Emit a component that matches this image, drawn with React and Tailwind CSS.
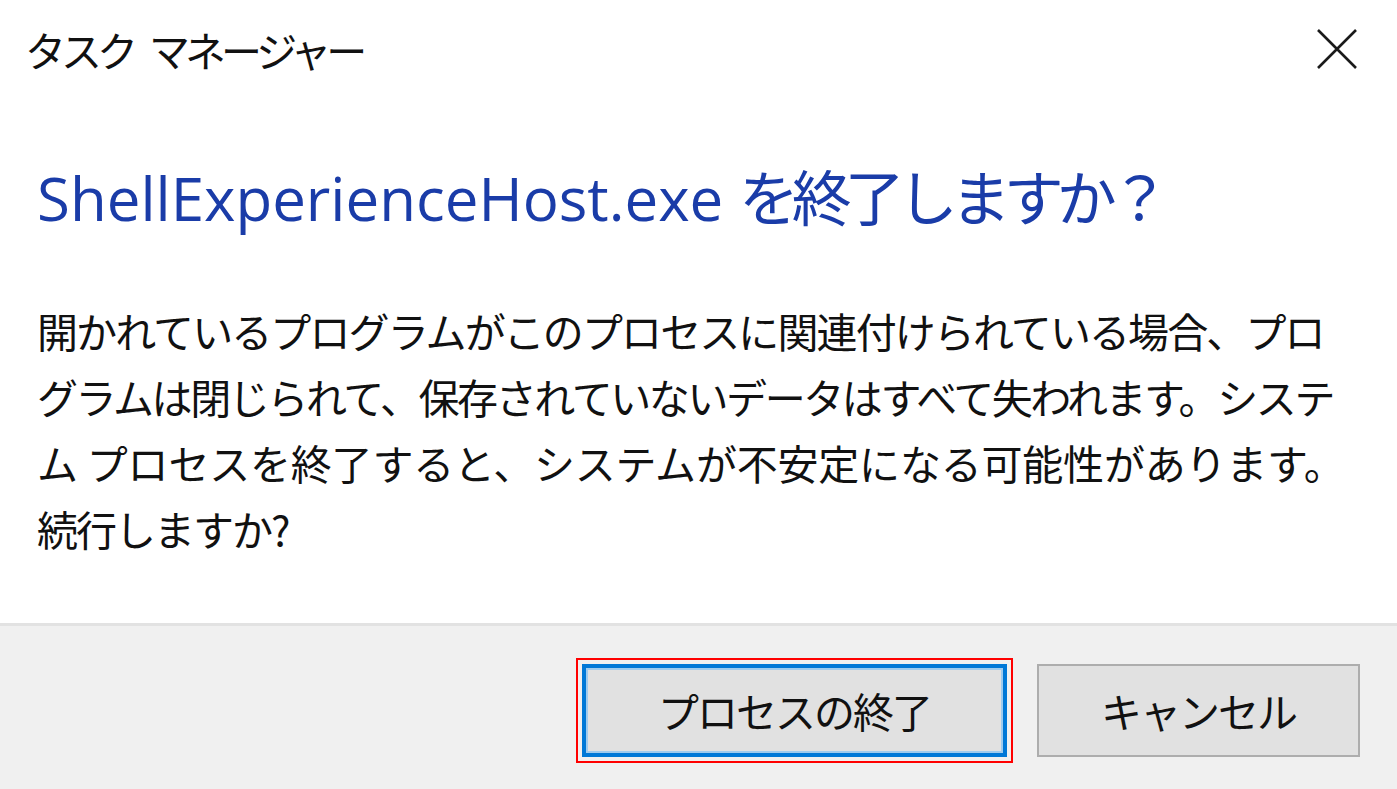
import React from "react";

const jp = { fontFamily: '"Noto Sans CJK JP", "Noto Sans", sans-serif' };
const head = { fontFamily: '"Open Sans", "Noto Sans CJK JP", sans-serif' };

export default function App() {
  return (
    <div className="w-[1397px] h-[789px] bg-white flex flex-col overflow-hidden text-black" style={jp}>
      {/* Title bar */}
      <div className="h-[98px] flex items-center justify-between pl-[25px] pr-[40px] shrink-0">
        <div className="flex text-[41px] leading-[60px] tracking-[-5px] text-[#111]">
          <span>タスク</span>
          <span className="ml-[16px]">マネージャー</span>
        </div>
        <svg width="40" height="40" viewBox="0 0 40 40" className="text-[#1a1a1a]">
          <path d="M1 1 L39 39 M39 1 L1 39" stroke="currentColor" strokeWidth="2.6" fill="none" />
        </svg>
      </div>

      {/* Main instruction */}
      <div className="mt-[57px] pl-[37px] h-[80px] leading-[80px] whitespace-nowrap text-[#1a3ca8]">
        <span className="text-[60px]" style={head}>ShellExperienceHost.exe </span>
        <span className="text-[60px] tracking-[-7px]" style={jp}>を終了しますか？</span>
      </div>

      {/* Body */}
      <div className="mt-[62px] pl-[37px] text-[41px] leading-[66px] text-[#111] whitespace-nowrap">
        <div className="tracking-[-1.9px]">開かれているプログラムがこのプロセスに関連付けられている場合、プロ</div>
        <div className="tracking-[-2.4px]">グラムは閉じられて、保存されていないデータはすべて失われます。システ</div>
        <div className="tracking-[-0.2px]">ム プロセスを終了すると、システムが不安定になる可能性があります。</div>
        <div className="tracking-[-2px]">続行しますか?</div>
      </div>

      {/* Footer */}
      <div className="mt-auto h-[166px] shrink-0 border-t-[3px] border-[#e2e2e2] bg-[#f0f0f0] flex items-center justify-end pr-[37px] pt-[6px]">
        <div className="border-2 border-[#ff0000] p-[4px]">
          <div className="w-[425px] h-[93px] border-[4px] border-[#0078d7] bg-[#e1e1e1] shadow-[inset_0_0_0_2px_#9fcbee] flex items-center justify-center text-[41px] tracking-[-2px] text-[#111]">
            プロセスの終了
          </div>
        </div>
        <div className="ml-[24px] w-[323px] h-[93px] border-2 border-[#adadad] bg-[#e1e1e1] flex items-center justify-center text-[41px] tracking-[-2px] text-[#111]">
          キャンセル
        </div>
      </div>
    </div>
  );
}
